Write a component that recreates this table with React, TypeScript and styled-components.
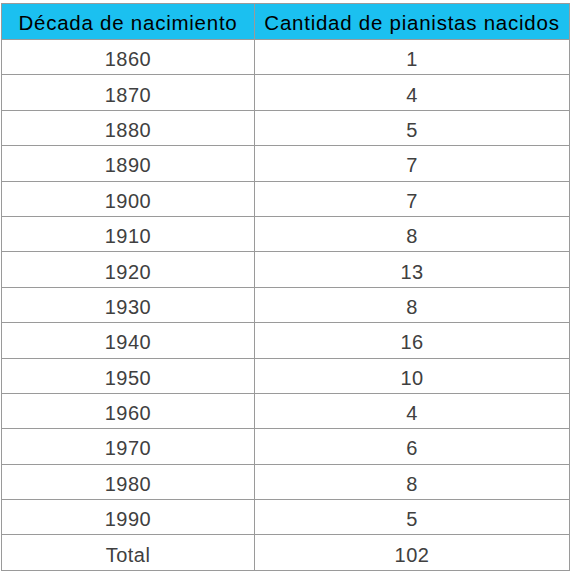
import React from "react";
import styled, { createGlobalStyle } from "styled-components";

const GlobalStyle = createGlobalStyle`
  html, body {
    margin: 0;
    padding: 0;
    background: #ffffff;
  }
  body {
    font-family: "Liberation Sans", Arial, sans-serif;
  }
`;

const Page = styled.div`
  padding: 3px 0 0 1px;
`;

const Table = styled.table`
  width: 568px;
  border-collapse: collapse;
  table-layout: fixed;
  font-size: 20px;
  letter-spacing: 0.5px;
`;

const HeadCell = styled.th<{ $width: number }>`
  box-sizing: border-box;
  width: ${(p) => p.$width}px;
  height: 36px;
  padding: 2px 0 0;
  background: #1bc0f0;
  color: #000000;
  font-weight: normal;
  font-size: 20.5px;
  letter-spacing: 0.75px;
  line-height: 24px;
  text-align: center;
  border: 1px solid #9a9a9a;
`;

const Cell = styled.td`
  box-sizing: border-box;
  height: 35.4px;
  padding: 4px 0 0;
  line-height: 24px;
  color: #404040;
  text-align: center;
  border: 1px solid #9a9a9a;
`;

const rows: [string, number][] = [
  ["1860", 1],
  ["1870", 4],
  ["1880", 5],
  ["1890", 7],
  ["1900", 7],
  ["1910", 8],
  ["1920", 13],
  ["1930", 8],
  ["1940", 16],
  ["1950", 10],
  ["1960", 4],
  ["1970", 6],
  ["1980", 8],
  ["1990", 5],
];

export default function App() {
  const total = rows.reduce((sum, [, n]) => sum + n, 0);
  return (
    <Page>
      <GlobalStyle />
      <Table>
        <thead>
          <tr>
            <HeadCell $width={253}>Década de nacimiento</HeadCell>
            <HeadCell $width={315}>Cantidad de pianistas nacidos</HeadCell>
          </tr>
        </thead>
        <tbody>
          {rows.map(([decade, count]) => (
            <tr key={decade}>
              <Cell>{decade}</Cell>
              <Cell>{count}</Cell>
            </tr>
          ))}
          <tr>
            <Cell>Total</Cell>
            <Cell>{total}</Cell>
          </tr>
        </tbody>
      </Table>
    </Page>
  );
}
